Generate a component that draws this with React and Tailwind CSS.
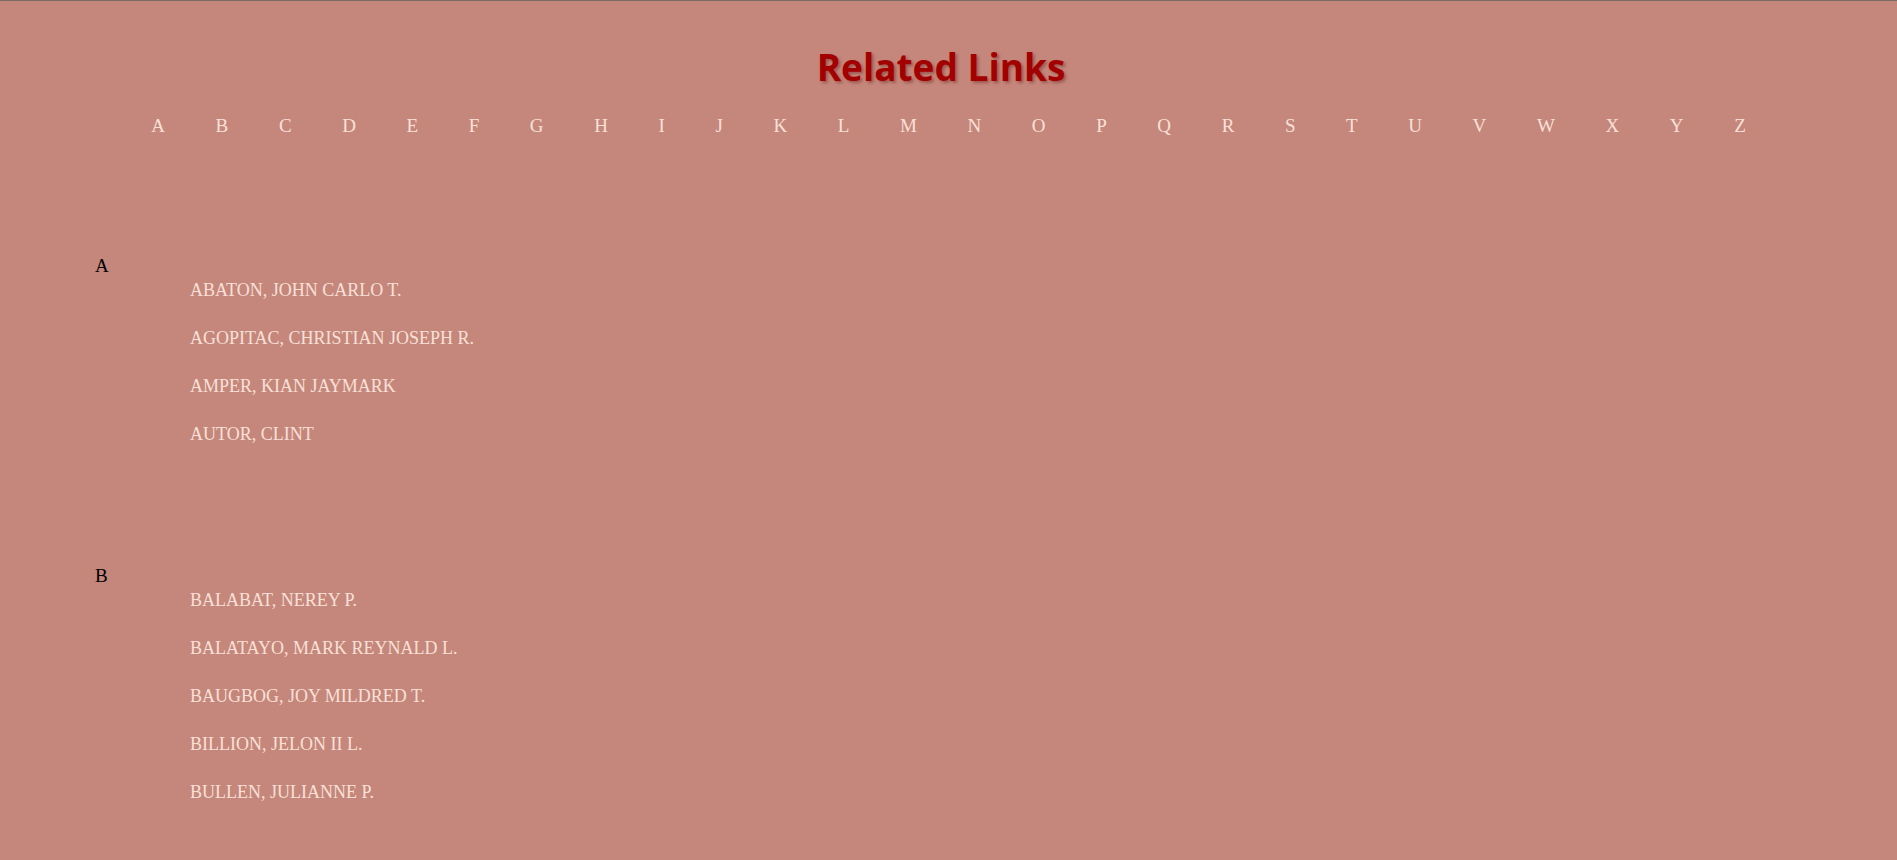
const letters = "ABCDEFGHIJKLMNOPQRSTUVWXYZ".split("");

const groups = [
  {
    letter: "A",
    names: [
      "ABATON, JOHN CARLO T.",
      "AGOPITAC, CHRISTIAN JOSEPH R.",
      "AMPER, KIAN JAYMARK",
      "AUTOR, CLINT",
    ],
  },
  {
    letter: "B",
    names: [
      "BALABAT, NEREY P.",
      "BALATAYO, MARK REYNALD L.",
      "BAUGBOG, JOY MILDRED T.",
      "BILLION, JELON II L.",
      "BULLEN, JULIANNE P.",
    ],
  },
];

export default function App() {
  return (
    <div className="min-h-screen bg-[#c5877b] border-t border-[#7b6a64] font-['Liberation_Serif',serif]">
      {/* title */}
      <h1 className="pt-[42px] pr-[15px] text-center text-[37px] leading-[48px] font-bold text-[#a30000] font-['Open_Sans',sans-serif] [text-shadow:2px_2px_3px_rgba(80,0,0,0.35)]">
        Related Links
      </h1>

      {/* alphabet row */}
      <ul className="mt-[23px] flex justify-center gap-[50.6px]">
        {letters.map((l) => (
          <li key={l} className="text-[19px] leading-[24px] text-[#f8e0d8]">
            <a href={"#" + l}>{l}</a>
          </li>
        ))}
      </ul>

      {/* groups */}
      <div className="pl-[95px] pt-[116px] flex flex-col gap-[118px]">
        {groups.map((g) => (
          <section key={g.letter} id={g.letter}>
            <div className="text-[19px] leading-[24px] text-black">{g.letter}</div>
            <ul className="pl-[95px] flex flex-col gap-6">
              {g.names.map((n) => (
                <li key={n} className="text-[18px] leading-[24px] text-[#f8e0d8]">
                  <a href="#">{n}</a>
                </li>
              ))}
            </ul>
          </section>
        ))}
      </div>
    </div>
  );
}
